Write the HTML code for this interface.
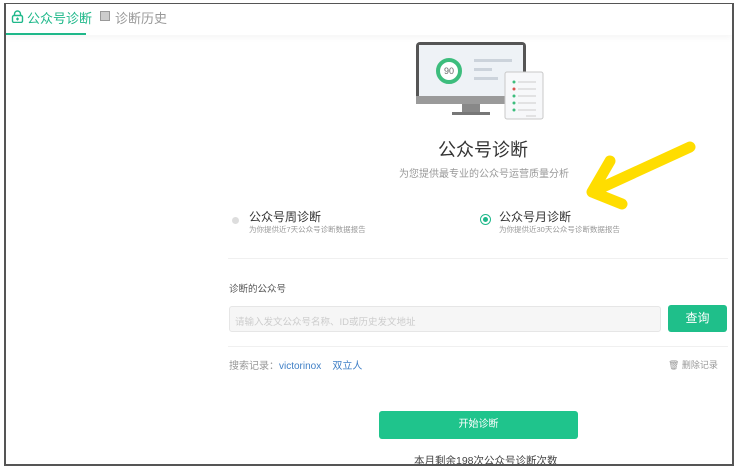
<!DOCTYPE html>
<html><head><meta charset="utf-8"><style>
*{margin:0;padding:0;box-sizing:border-box}
body{width:740px;height:471px;background:#fff;position:relative;overflow:hidden;font-family:"Liberation Sans","Noto Sans CJK SC",sans-serif;color:#333}
.frame{position:absolute;left:4px;top:3px;width:730px;height:463px;border:2px solid #555;border-top-width:1px;overflow:hidden;background:#fff}
.abs{position:absolute;white-space:nowrap}
.tabs{position:absolute;left:0;top:0;width:100%;height:31px;background:#fff;box-shadow:0 3px 6px rgba(0,0,0,0.04)}
.c{position:absolute;left:-2px;top:-2px;width:740px;height:471px}
</style></head><body>
<div class="frame">
 <div class="tabs"></div>
 <div class="abs" style="left:0;top:29px;width:80px;height:2px;background:#1fb88a"></div>
 <svg class="abs" style="left:5px;top:6px" width="13" height="13" viewBox="0 0 13 13"><path d="M3.5 5.5V4a3 3 0 0 1 6 0v1.5" fill="none" stroke="#1fb88a" stroke-width="1.4"/><rect x="1.5" y="5.5" width="10" height="7" rx="1.5" fill="none" stroke="#1fb88a" stroke-width="1.4"/><path d="M6.5 7.5v3M5 9h3" stroke="#1fb88a" stroke-width="1.2"/></svg>
 <div class="abs" style="left:21px;top:4px;font-size:13px;color:#1fb88a">公众号诊断</div>
 <div class="abs" style="left:94px;top:7px;width:10px;height:10px;border:1.5px solid #999;background:#ccc"></div>
 <div class="abs" style="left:109px;top:4px;font-size:13px;color:#999">诊断历史</div>
<div class="c">
 <svg class="abs" style="left:410px;top:38px" width="130" height="80" viewBox="0 0 130 80">
  <rect x="2" y="2" width="110" height="60" rx="4" fill="#555"/>
  <rect x="5" y="5" width="104" height="51" fill="#eef2f6"/>
  <rect x="2" y="56" width="110" height="8" fill="#9a9a9a"/>
  <rect x="48" y="64" width="18" height="8" fill="#888"/>
  <rect x="38" y="72" width="38" height="3" fill="#777"/>
  <circle cx="35" cy="31" r="11" fill="#fff" stroke="#3dbd7d" stroke-width="4"/>
  <text x="35" y="34" font-size="9" text-anchor="middle" fill="#666" font-family="Liberation Sans">90</text>
  <rect x="60" y="19" width="38" height="3" fill="#ccd3db"/><rect x="60" y="28" width="18" height="3" fill="#ccd3db"/><rect x="60" y="37" width="24" height="3" fill="#ccd3db"/>
  <rect x="91" y="32" width="38" height="47" rx="2" fill="#f7f8fa" stroke="#c8c8c8"/>
  <circle cx="100" cy="42" r="1.5" fill="#3dbd7d"/><circle cx="100" cy="49" r="1.5" fill="#d9534f"/><circle cx="100" cy="56" r="1.5" fill="#3dbd7d"/><circle cx="100" cy="63" r="1.5" fill="#3dbd7d"/><circle cx="100" cy="70" r="1.5" fill="#3dbd7d"/>
  <path d="M104 42h18M104 49h18M104 56h18M104 63h18M104 70h18M112 76h10" stroke="#ccc" stroke-width="1"/>
 </svg>
 <div class="abs" style="left:434px;top:134px;font-size:18px;color:#333">公众号诊断</div>
 <div class="abs" style="left:395px;top:163px;font-size:10px;color:#999">为您提供最专业的公众号运营质量分析</div>

 <svg class="abs" style="left:576px;top:138px" width="120" height="70" viewBox="0 0 120 70"><path d="M110 7L12 52M12 52L30 21M12 52L42 64" fill="none" stroke="#ffdd00" stroke-width="11" stroke-linecap="round" stroke-linejoin="round"/></svg>

 <div class="abs" style="left:228px;top:215px;width:7px;height:7px;border-radius:50%;background:#ddd"></div>
 <div class="abs" style="left:245px;top:206px;font-size:12px;color:#333">公众号周诊断</div>
 <div class="abs" style="left:245px;top:222px;font-size:7.5px;color:#999">为你提供近7天公众号诊断数据报告</div>
 <div class="abs" style="left:476px;top:212px;width:11px;height:11px;border-radius:50%;border:1px solid #1fb88a;background:#fff"></div>
 <div class="abs" style="left:479px;top:215px;width:5px;height:5px;border-radius:50%;background:#1fb88a"></div>
 <div class="abs" style="left:495px;top:206px;font-size:12px;color:#333">公众号月诊断</div>
 <div class="abs" style="left:495px;top:222px;font-size:7.5px;color:#999">为你提供近30天公众号诊断数据报告</div>

 <div class="abs" style="left:224px;top:256px;width:500px;height:1px;background:#f0f0f0"></div>
 <div class="abs" style="left:225px;top:279px;font-size:9.5px;color:#555">诊断的公众号</div>
 <div class="abs" style="left:225px;top:304px;width:432px;height:26px;border:1px solid #e6e6e6;border-radius:3px;background:#f6f6f6"></div>
 <div class="abs" style="left:231px;top:312px;font-size:9.5px;color:#ccc">请输入发文公众号名称、ID或历史发文地址</div>
 <div class="abs" style="left:664px;top:303px;width:59px;height:27px;border-radius:3px;background:#1fbf8a;color:#fff;font-size:12px;text-align:center;line-height:27px">查询</div>
 <div class="abs" style="left:224px;top:344px;width:500px;height:1px;background:#f0f0f0"></div>
 <div class="abs" style="left:225px;top:355px;font-size:10px;color:#999">搜索记录：<span style="color:#3f7fc6">victorinox</span>&nbsp;&nbsp;&nbsp;&nbsp;<span style="color:#3f7fc6">双立人</span></div>
 <div class="abs" style="left:664px;top:356px;font-size:9px;color:#999">🗑 删除记录</div>
 <div class="abs" style="left:375px;top:409px;width:199px;height:28px;border-radius:3px;background:#1fc48c;color:#fff;font-size:10px;text-align:center;line-height:28px">开始诊断</div>
 <div class="abs" style="left:410px;top:451px;font-size:10.5px;color:#444">本月剩余198次公众号诊断次数</div>
</div>
</div>
</body></html>
